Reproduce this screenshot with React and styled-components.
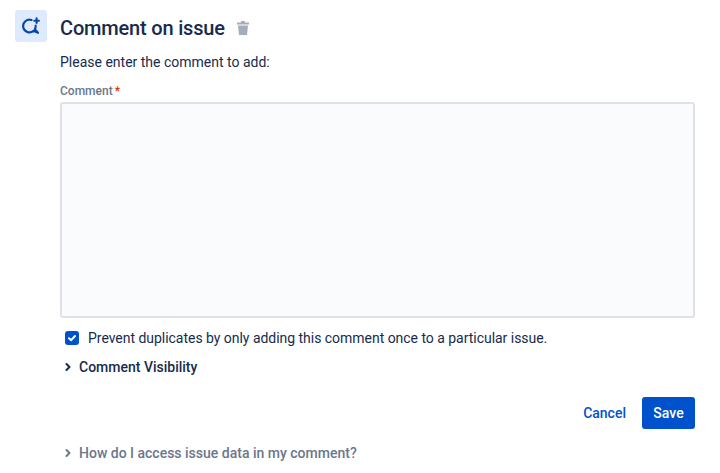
import React from "react";
import styled, { createGlobalStyle } from "styled-components";

const Global = createGlobalStyle`
  html, body {
    margin: 0;
    background: #fff;
  }
  body {
    font-family: Roboto, "Noto Sans", sans-serif;
    color: #172b4d;
  }
`;

const Page = styled.div`
  display: grid;
  grid-template-columns: 32px 1fr;
  column-gap: 13px;
  width: 680px;
  padding: 10px 25px 0 15px;
`;

const IconTile = styled.div`
  width: 32px;
  height: 32px;
  border-radius: 3px;
  background: #deebff;
  display: flex;
  align-items: center;
  justify-content: center;
`;

const Content = styled.div`
  min-width: 0;
`;

const TitleRow = styled.div`
  display: flex;
  align-items: center;
  gap: 11px;
  height: 36px;
`;

const Title = styled.h1`
  margin: 0;
  font-size: 20px;
  font-weight: 500;
  line-height: 36px;
  letter-spacing: -0.18px;
  color: #172b4d;
`;

const Intro = styled.p`
  margin: 6px 0 0;
  font-size: 14px;
  line-height: 20px;
`;

const FieldLabel = styled.label`
  display: block;
  margin-top: 11px;
  font-size: 12px;
  font-weight: 500;
  line-height: 16px;
  color: #6b778c;
`;

const Required = styled.span`
  margin-left: 2px;
  color: #de350b;
`;

const TextArea = styled.div`
  box-sizing: border-box;
  height: 216px;
  margin-top: 3px;
  border: 2px solid #dfe1e6;
  border-radius: 3px;
  background: #fafbfc;
`;

const CheckRow = styled.div`
  display: flex;
  align-items: center;
  gap: 9px;
  margin-top: 10px;
  padding-left: 5px;
  height: 20px;
  font-size: 14px;
  letter-spacing: -0.03px;
`;

const CheckBox = styled.span`
  width: 14px;
  height: 14px;
  border-radius: 3px;
  background: #0052cc;
  display: flex;
  align-items: center;
  justify-content: center;
`;

const Disclosure = styled.div`
  display: flex;
  align-items: center;
  gap: 8px;
  height: 20px;
  padding-left: 5px;
  margin-top: ${(props) => props.$top}px;
  font-size: 14px;
  font-weight: 500;
  color: ${(props) => (props.$muted ? "#6b778c" : "#172b4d")};
`;

const Actions = styled.div`
  display: flex;
  justify-content: flex-end;
  align-items: center;
  gap: 16px;
  margin-top: 20px;
`;

const LinkButton = styled.button`
  border: 0;
  padding: 0;
  background: none;
  font: inherit;
  font-size: 14px;
  font-weight: 500;
  color: #0052cc;
`;

const SaveButton = styled.button`
  width: 53px;
  height: 32px;
  border: 0;
  border-radius: 3px;
  background: #0052cc;
  color: #fff;
  font: inherit;
  font-size: 14px;
  font-weight: 500;
`;

const CommentIcon = () => (
  <svg width="20" height="20" viewBox="0 0 20 20" fill="none" stroke="#0747a6" strokeWidth="2.1" strokeLinecap="round" strokeLinejoin="round">
    <path d="M10.55 4.08 A6.3 6.3 0 1 0 12.45 14.83 L17 16.8 L13.85 13.15 A6.3 6.3 0 0 0 14.7 9.6" />
    <path d="M15.6 2.4 V7 M13.3 4.7 H17.9" />
  </svg>
);

const TrashIcon = () => (
  <svg width="14" height="16" viewBox="0 0 14 16" fill="#a5adba">
    <path d="M1 2.5 H4.8 L5.4 1 H8.6 L9.2 2.5 H13 V4.5 H1 Z" />
    <path d="M2 5.5 H12 L11 15 H3 Z" />
  </svg>
);

const CheckMark = () => (
  <svg width="10" height="10" viewBox="0 0 10 10" fill="none" stroke="#fff" strokeWidth="2" strokeLinecap="round" strokeLinejoin="round">
    <path d="M2 5.2 L4.2 7.2 L8 3" />
  </svg>
);

const Chevron = ({ color }) => (
  <svg width="6" height="10" viewBox="0 0 6 10" fill="none" stroke={color} strokeWidth="2" strokeLinecap="round" strokeLinejoin="round">
    <path d="M1.5 2 L4.5 5 L1.5 8" />
  </svg>
);

export default function App() {
  return (
    <>
      <Global />
      <Page>
        <IconTile>
          <CommentIcon />
        </IconTile>
        <Content>
          <TitleRow>
            <Title>Comment on issue</Title>
            <TrashIcon />
          </TitleRow>
          <Intro>Please enter the comment to add:</Intro>
          <FieldLabel>
            Comment<Required>*</Required>
          </FieldLabel>
          <TextArea />
          <CheckRow>
            <CheckBox>
              <CheckMark />
            </CheckBox>
            Prevent duplicates by only adding this comment once to a particular issue.
          </CheckRow>
          <Disclosure $top={9}>
            <Chevron color="#172b4d" />
            Comment Visibility
          </Disclosure>
          <Actions>
            <LinkButton>Cancel</LinkButton>
            <SaveButton>Save</SaveButton>
          </Actions>
          <Disclosure $top={14} $muted>
            <Chevron color="#6b778c" />
            How do I access issue data in my comment?
          </Disclosure>
        </Content>
      </Page>
    </>
  );
}
